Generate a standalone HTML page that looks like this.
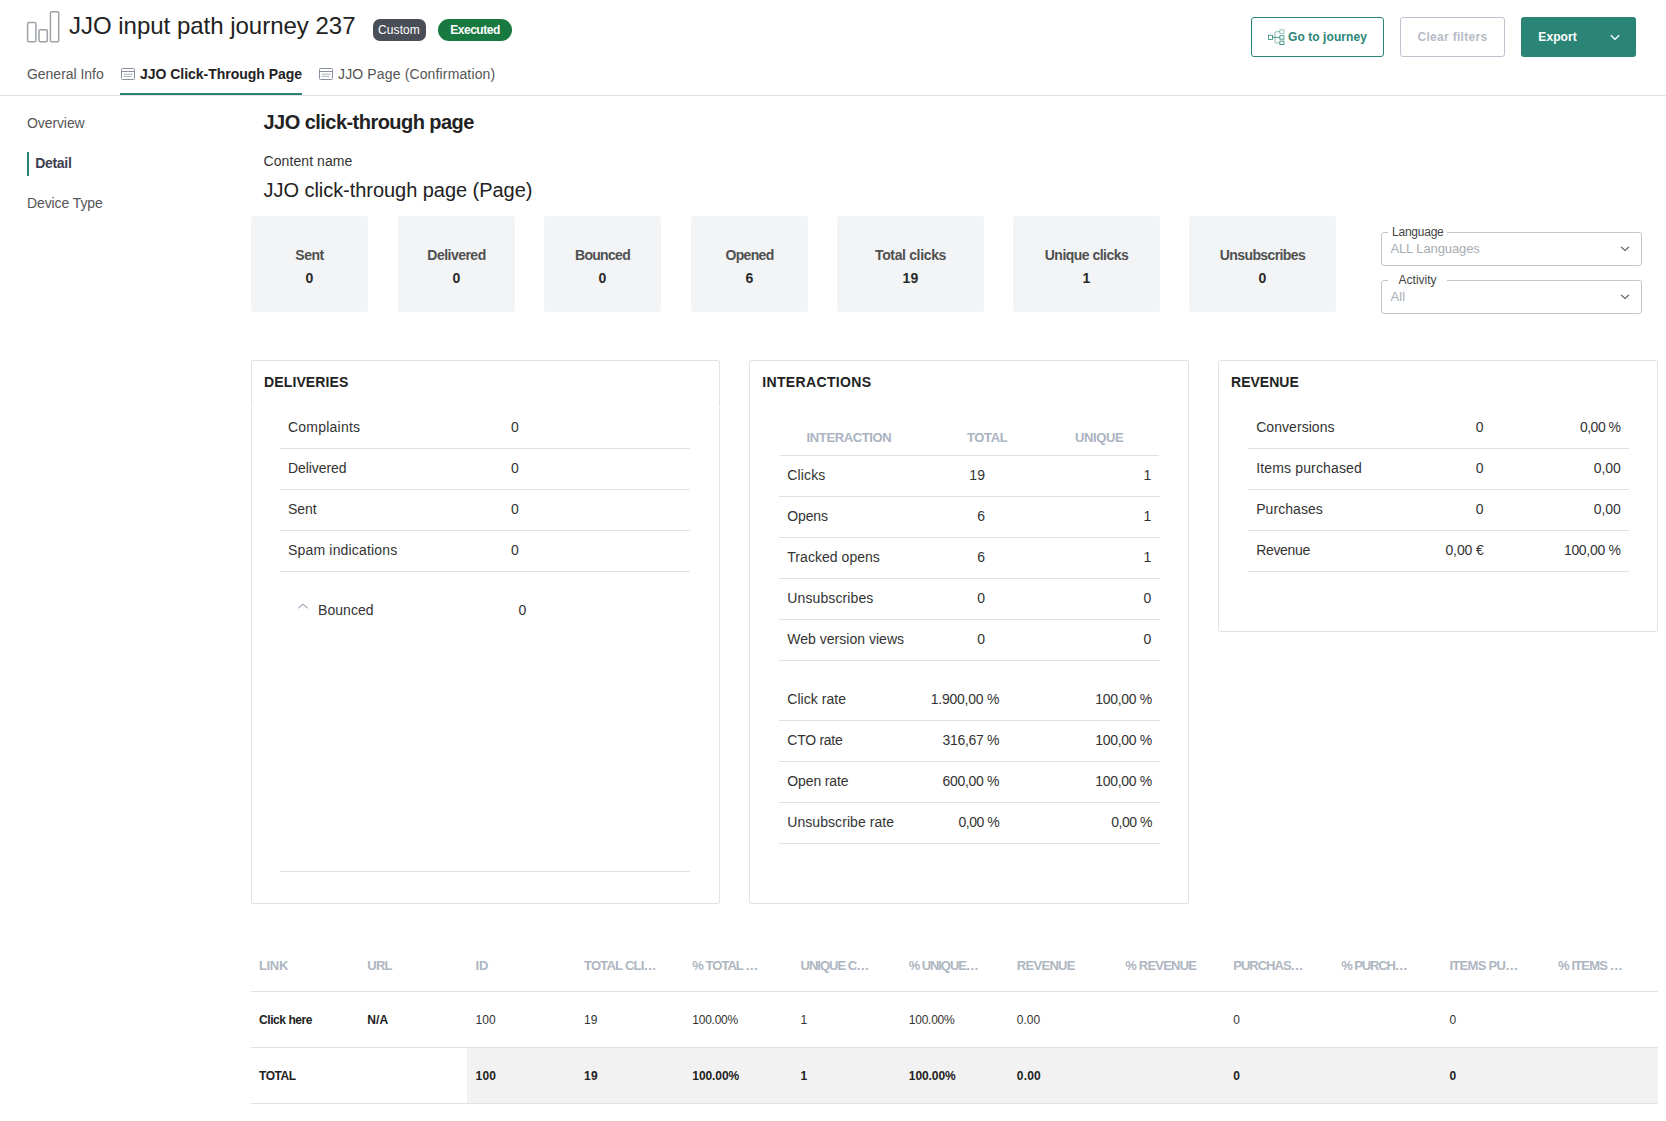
<!DOCTYPE html>
<html lang="en"><head><meta charset="utf-8"><title>JJO input path journey 237</title>
<style>
html,body{margin:0;padding:0;background:#fff}
body{width:1666px;height:1121px;position:relative;overflow:hidden;font-family:"Liberation Sans",sans-serif}
.t{position:absolute;white-space:pre;line-height:20px;font-family:"Liberation Sans",sans-serif}
svg{position:absolute;overflow:visible}
</style></head><body>
<svg style="left:26px;top:10px" width="34" height="34" viewBox="26 10 34 34" fill="none" stroke="#9da1a8" stroke-width="1.5">
<rect x="27.6" y="22.6" width="8.3" height="19.2" rx="1.3"/><rect x="39" y="29.8" width="8.3" height="12" rx="1.3"/><rect x="50.4" y="11.8" width="8.3" height="30" rx="1.3"/></svg>
<div style="position:absolute;left:373px;top:19px;width:53px;height:22px;background:#4a4e57;border-radius:7px"></div>
<div style="position:absolute;left:438px;top:19px;width:74px;height:22px;background:#17793f;border-radius:11px"></div>
<div style="position:absolute;left:1251px;top:17px;width:131px;height:38px;border:1px solid #2b8576;border-radius:3px;background:#fff"></div>
<svg style="left:1267px;top:28px" width="18" height="18" viewBox="1267 28 18 18" fill="none" stroke="#2b8576" stroke-width=".8">
<rect x="1268.4" y="35.2" width="4.2" height="4.2"/>
<rect x="1279.9" y="29.8" width="4" height="3.6" opacity=".6"/>
<rect x="1279.9" y="35.7" width="4" height="3.5"/>
<rect x="1279.9" y="41.1" width="4" height="3.5"/>
<path d="M1272.5 37.4H1280"/>
<path d="M1280 31.7H1276.2Q1275 31.7 1275 32.9V41.7Q1275 42.9 1276.2 42.9H1280" opacity=".7"/></svg>
<div style="position:absolute;left:1400px;top:17px;width:103px;height:38px;border:1px solid #bfc3cf;border-radius:3px;background:#fff"></div>
<div style="position:absolute;left:1521px;top:17px;width:115px;height:40px;background:#2b8576;border-radius:3px"></div>
<div style="position:absolute;left:1593px;top:17px;width:1px;height:40px;background:#2a8073"></div>
<svg style="left:1609px;top:32px" width="12" height="10" viewBox="1609 32 12 10" fill="none" stroke="#fff" stroke-width="1.3"><path d="M1610.8 35.2L1615 39.3L1619.2 35.2"/></svg>
<svg style="left:121px;top:68px" width="15" height="13" viewBox="0 0 15 13" fill="none" stroke="#8a8fa0" stroke-width="1">
<rect x="0.5" y="0.5" width="13" height="11" rx="1"/><path d="M0.5 3.5H13.5"/><path d="M2.6 6.2H11.8M2.6 8.4H10.4" stroke-width=".8" opacity=".85"/></svg>
<svg style="left:319px;top:68px" width="15" height="13" viewBox="0 0 15 13" fill="none" stroke="#8a8fa0" stroke-width="1">
<rect x="0.5" y="0.5" width="13" height="11" rx="1"/><path d="M0.5 3.5H13.5"/><path d="M2.6 6.2H11.8M2.6 8.4H10.4" stroke-width=".8" opacity=".85"/></svg>
<div style="position:absolute;left:0px;top:95px;width:1666px;height:1px;background:#dfe1e6"></div>
<div style="position:absolute;left:120px;top:93px;width:182px;height:2px;background:#2b8576"></div>
<div style="position:absolute;left:27px;top:152px;width:2px;height:24px;background:#2b8576"></div>
<div style="position:absolute;left:251px;top:216px;width:117px;height:96px;background:#f3f4f6;border-radius:3px"></div>
<div style="position:absolute;left:398px;top:216px;width:117px;height:96px;background:#f3f4f6;border-radius:3px"></div>
<div style="position:absolute;left:544px;top:216px;width:117px;height:96px;background:#f3f4f6;border-radius:3px"></div>
<div style="position:absolute;left:691px;top:216px;width:117px;height:96px;background:#f3f4f6;border-radius:3px"></div>
<div style="position:absolute;left:837px;top:216px;width:147px;height:96px;background:#f3f4f6;border-radius:3px"></div>
<div style="position:absolute;left:1013px;top:216px;width:147px;height:96px;background:#f3f4f6;border-radius:3px"></div>
<div style="position:absolute;left:1189px;top:216px;width:147px;height:96px;background:#f3f4f6;border-radius:3px"></div>
<div style="position:absolute;left:1381px;top:232px;width:259px;height:32px;border:1px solid #c6c6c6;border-radius:3px"></div>
<div style="position:absolute;left:1388px;top:231px;width:59px;height:3px;background:#fff"></div>
<svg style="left:1619px;top:244px" width="12" height="9" viewBox="0 0 12 9" fill="none" stroke="#505050" stroke-width="1.1"><path d="M2.1 2.8L6 6.6L9.9 2.8"/></svg>
<div style="position:absolute;left:1381px;top:280px;width:259px;height:32px;border:1px solid #c6c6c6;border-radius:3px"></div>
<div style="position:absolute;left:1388px;top:279px;width:59px;height:3px;background:#fff"></div>
<svg style="left:1619px;top:292px" width="12" height="9" viewBox="0 0 12 9" fill="none" stroke="#505050" stroke-width="1.1"><path d="M2.1 2.8L6 6.6L9.9 2.8"/></svg>
<div style="position:absolute;left:251px;top:360px;width:467px;height:542px;border:1px solid #e0e2e9;border-radius:2px"></div>
<div style="position:absolute;left:749px;top:360px;width:438px;height:542px;border:1px solid #e0e2e9;border-radius:2px"></div>
<div style="position:absolute;left:1218px;top:360px;width:438px;height:270px;border:1px solid #e0e2e9;border-radius:2px"></div>
<div style="position:absolute;left:251px;top:407px;width:1px;height:1px;background:#fff"></div>
<div style="position:absolute;left:719px;top:407px;width:1px;height:1px;background:#fff"></div>
<div style="position:absolute;left:280px;top:448px;width:410px;height:1px;background:#dfe1ea"></div>
<div style="position:absolute;left:280px;top:489px;width:410px;height:1px;background:#dfe1ea"></div>
<div style="position:absolute;left:280px;top:530px;width:410px;height:1px;background:#dfe1ea"></div>
<div style="position:absolute;left:280px;top:571px;width:410px;height:1px;background:#dfe1ea"></div>
<svg style="left:296px;top:601px" width="14" height="9" viewBox="296 601 14 9" fill="none" stroke="#7a86a0" stroke-width="1"><path d="M298.2 608.2L303 604.2L307.8 608.2"/></svg>
<div style="position:absolute;left:280px;top:871px;width:410px;height:1px;background:#dfe1ea"></div>
<div style="position:absolute;left:780px;top:455px;width:379px;height:1px;background:#dfe1ea"></div>
<div style="position:absolute;left:779px;top:496px;width:381px;height:1px;background:#dfe1ea"></div>
<div style="position:absolute;left:779px;top:537px;width:381px;height:1px;background:#dfe1ea"></div>
<div style="position:absolute;left:779px;top:578px;width:381px;height:1px;background:#dfe1ea"></div>
<div style="position:absolute;left:779px;top:619px;width:381px;height:1px;background:#dfe1ea"></div>
<div style="position:absolute;left:779px;top:660px;width:381px;height:1px;background:#dfe1ea"></div>
<div style="position:absolute;left:779px;top:720px;width:381px;height:1px;background:#dfe1ea"></div>
<div style="position:absolute;left:779px;top:761px;width:381px;height:1px;background:#dfe1ea"></div>
<div style="position:absolute;left:779px;top:802px;width:381px;height:1px;background:#dfe1ea"></div>
<div style="position:absolute;left:779px;top:843px;width:381px;height:1px;background:#dfe1ea"></div>
<div style="position:absolute;left:1248px;top:448px;width:381px;height:1px;background:#dfe1ea"></div>
<div style="position:absolute;left:1248px;top:489px;width:381px;height:1px;background:#dfe1ea"></div>
<div style="position:absolute;left:1248px;top:530px;width:381px;height:1px;background:#dfe1ea"></div>
<div style="position:absolute;left:1248px;top:571px;width:381px;height:1px;background:#dfe1ea"></div>
<div style="position:absolute;left:251px;top:991px;width:1407px;height:1px;background:#e1e3e8"></div>
<div style="position:absolute;left:251px;top:1047px;width:1407px;height:1px;background:#e1e3e8"></div>
<div style="position:absolute;left:251px;top:1103px;width:1407px;height:1px;background:#e1e3e8"></div>
<div style="position:absolute;left:467px;top:1048px;width:1191px;height:55px;background:#f2f2f2"></div>
<span class="t" style="left:69.00px;top:16px;font-size:24px;font-weight:400;color:#222;letter-spacing:-0.014px">JJO input path journey 237</span>
<span class="t" style="left:378.10px;top:20px;font-size:12px;font-weight:400;color:#fff;letter-spacing:0.076px">Custom</span>
<span class="t" style="left:450.25px;top:20px;font-size:12px;font-weight:700;color:#fff;letter-spacing:-0.482px">Executed</span>
<span class="t" style="left:1288.10px;top:27px;font-size:12px;font-weight:700;color:#2b8576;letter-spacing:0.062px">Go to journey</span>
<span class="t" style="left:1417.50px;top:27px;font-size:12px;font-weight:700;color:#b7bbc6;letter-spacing:0.305px">Clear filters</span>
<span class="t" style="left:1538.30px;top:27px;font-size:12px;font-weight:700;color:#fff;letter-spacing:0.097px">Export</span>
<span class="t" style="left:27.00px;top:64px;font-size:14px;font-weight:400;color:#555;letter-spacing:-0.030px">General Info</span>
<span class="t" style="left:140.00px;top:64px;font-size:14px;font-weight:700;color:#222;letter-spacing:-0.027px">JJO Click-Through Page</span>
<span class="t" style="left:338.00px;top:64px;font-size:14px;font-weight:400;color:#555;letter-spacing:0.141px">JJO Page (Confirmation)</span>
<span class="t" style="left:27.00px;top:113px;font-size:14px;font-weight:400;color:#555;letter-spacing:-0.095px">Overview</span>
<span class="t" style="left:35.20px;top:153px;font-size:14px;font-weight:700;color:#3d4050;letter-spacing:-0.302px">Detail</span>
<span class="t" style="left:27.00px;top:193px;font-size:14px;font-weight:400;color:#555;letter-spacing:-0.098px">Device Type</span>
<span class="t" style="left:263.50px;top:112px;font-size:20px;font-weight:700;color:#222;letter-spacing:-0.541px">JJO click-through page</span>
<span class="t" style="left:263.50px;top:151px;font-size:14px;font-weight:400;color:#333;letter-spacing:0.086px">Content name</span>
<span class="t" style="left:263.50px;top:180px;font-size:20px;font-weight:400;color:#222;letter-spacing:-0.045px">JJO click-through page (Page)</span>
<span class="t" style="left:295.28px;top:245px;font-size:14px;font-weight:700;color:#505050;letter-spacing:-0.477px">Sent</span>
<span class="t" style="left:305.48px;top:268px;font-size:14px;font-weight:700;color:#2a2a2a;letter-spacing:0.250px">0</span>
<span class="t" style="left:427.33px;top:245px;font-size:14px;font-weight:700;color:#505050;letter-spacing:-0.523px">Delivered</span>
<span class="t" style="left:452.48px;top:268px;font-size:14px;font-weight:700;color:#2a2a2a;letter-spacing:0.250px">0</span>
<span class="t" style="left:574.97px;top:245px;font-size:14px;font-weight:700;color:#505050;letter-spacing:-0.690px">Bounced</span>
<span class="t" style="left:598.48px;top:268px;font-size:14px;font-weight:700;color:#2a2a2a;letter-spacing:0.250px">0</span>
<span class="t" style="left:725.40px;top:245px;font-size:14px;font-weight:700;color:#505050;letter-spacing:-0.654px">Opened</span>
<span class="t" style="left:745.48px;top:268px;font-size:14px;font-weight:700;color:#2a2a2a;letter-spacing:0.250px">6</span>
<span class="t" style="left:874.98px;top:245px;font-size:14px;font-weight:700;color:#505050;letter-spacing:-0.348px">Total clicks</span>
<span class="t" style="left:902.46px;top:268px;font-size:14px;font-weight:700;color:#2a2a2a;letter-spacing:0.250px">19</span>
<span class="t" style="left:1044.77px;top:245px;font-size:14px;font-weight:700;color:#505050;letter-spacing:-0.523px">Unique clicks</span>
<span class="t" style="left:1082.48px;top:268px;font-size:14px;font-weight:700;color:#2a2a2a;letter-spacing:0.250px">1</span>
<span class="t" style="left:1219.79px;top:245px;font-size:14px;font-weight:700;color:#505050;letter-spacing:-0.598px">Unsubscribes</span>
<span class="t" style="left:1258.48px;top:268px;font-size:14px;font-weight:700;color:#2a2a2a;letter-spacing:0.250px">0</span>
<span class="t" style="left:1392.00px;top:222px;font-size:12px;font-weight:400;color:#444;letter-spacing:-0.236px">Language</span>
<span class="t" style="left:1390.40px;top:239px;font-size:13px;font-weight:400;color:#a9adb3;letter-spacing:-0.093px">ALL Languages</span>
<span class="t" style="left:1398.60px;top:270px;font-size:12px;font-weight:400;color:#444;letter-spacing:-0.002px">Activity</span>
<span class="t" style="left:1390.40px;top:287px;font-size:13px;font-weight:400;color:#a9adb3;letter-spacing:0.120px">All</span>
<span class="t" style="left:264.00px;top:372px;font-size:14px;font-weight:700;color:#222;letter-spacing:0.125px">DELIVERIES</span>
<span class="t" style="left:762.20px;top:372px;font-size:14px;font-weight:700;color:#222;letter-spacing:0.358px">INTERACTIONS</span>
<span class="t" style="left:1231.00px;top:372px;font-size:14px;font-weight:700;color:#222;letter-spacing:0.016px">REVENUE</span>
<span class="t" style="left:288.00px;top:417px;font-size:14px;font-weight:400;color:#333;letter-spacing:0.224px">Complaints</span>
<span class="t" style="left:511.00px;top:417px;font-size:14px;font-weight:400;color:#333;letter-spacing:0.196px">0</span>
<span class="t" style="left:288.00px;top:458px;font-size:14px;font-weight:400;color:#333;letter-spacing:-0.088px">Delivered</span>
<span class="t" style="left:511.00px;top:458px;font-size:14px;font-weight:400;color:#333;letter-spacing:0.196px">0</span>
<span class="t" style="left:288.00px;top:499px;font-size:14px;font-weight:400;color:#333;letter-spacing:-0.082px">Sent</span>
<span class="t" style="left:511.00px;top:499px;font-size:14px;font-weight:400;color:#333;letter-spacing:0.196px">0</span>
<span class="t" style="left:288.00px;top:540px;font-size:14px;font-weight:400;color:#333;letter-spacing:0.177px">Spam indications</span>
<span class="t" style="left:511.00px;top:540px;font-size:14px;font-weight:400;color:#333;letter-spacing:0.196px">0</span>
<span class="t" style="left:318.00px;top:600px;font-size:14px;font-weight:400;color:#333;letter-spacing:0.050px">Bounced</span>
<span class="t" style="left:518.50px;top:600px;font-size:14px;font-weight:400;color:#333;letter-spacing:0.196px">0</span>
<span class="t" style="left:806.60px;top:428px;font-size:13px;font-weight:700;color:#aab3bf;letter-spacing:-0.368px">INTERACTION</span>
<span class="t" style="left:967.00px;top:428px;font-size:13px;font-weight:700;color:#aab3bf;letter-spacing:-0.385px">TOTAL</span>
<span class="t" style="left:1075.00px;top:428px;font-size:13px;font-weight:700;color:#aab3bf;letter-spacing:-0.394px">UNIQUE</span>
<span class="t" style="left:787.30px;top:465px;font-size:14px;font-weight:400;color:#333;letter-spacing:0.133px">Clicks</span>
<span class="t" style="left:969.31px;top:465px;font-size:14px;font-weight:400;color:#333;letter-spacing:0.204px">19</span>
<span class="t" style="left:1143.51px;top:465px;font-size:14px;font-weight:400;color:#333;letter-spacing:0.196px">1</span>
<span class="t" style="left:787.30px;top:506px;font-size:14px;font-weight:400;color:#333;letter-spacing:-0.155px">Opens</span>
<span class="t" style="left:977.31px;top:506px;font-size:14px;font-weight:400;color:#333;letter-spacing:0.196px">6</span>
<span class="t" style="left:1143.51px;top:506px;font-size:14px;font-weight:400;color:#333;letter-spacing:0.196px">1</span>
<span class="t" style="left:787.30px;top:547px;font-size:14px;font-weight:400;color:#333;letter-spacing:0.039px">Tracked opens</span>
<span class="t" style="left:977.31px;top:547px;font-size:14px;font-weight:400;color:#333;letter-spacing:0.196px">6</span>
<span class="t" style="left:1143.51px;top:547px;font-size:14px;font-weight:400;color:#333;letter-spacing:0.196px">1</span>
<span class="t" style="left:787.30px;top:588px;font-size:14px;font-weight:400;color:#333;letter-spacing:0.106px">Unsubscribes</span>
<span class="t" style="left:977.31px;top:588px;font-size:14px;font-weight:400;color:#333;letter-spacing:0.196px">0</span>
<span class="t" style="left:1143.51px;top:588px;font-size:14px;font-weight:400;color:#333;letter-spacing:0.196px">0</span>
<span class="t" style="left:787.30px;top:629px;font-size:14px;font-weight:400;color:#333;letter-spacing:0.017px">Web version views</span>
<span class="t" style="left:977.31px;top:629px;font-size:14px;font-weight:400;color:#333;letter-spacing:0.196px">0</span>
<span class="t" style="left:1143.51px;top:629px;font-size:14px;font-weight:400;color:#333;letter-spacing:0.196px">0</span>
<span class="t" style="left:787.30px;top:689px;font-size:14px;font-weight:400;color:#333;letter-spacing:0.043px">Click rate</span>
<span class="t" style="left:930.80px;top:689px;font-size:14px;font-weight:400;color:#333;letter-spacing:-0.244px">1.900,00 %</span>
<span class="t" style="left:1095.33px;top:689px;font-size:14px;font-weight:400;color:#333;letter-spacing:-0.313px">100,00 %</span>
<span class="t" style="left:787.30px;top:730px;font-size:14px;font-weight:400;color:#333;letter-spacing:-0.277px">CTO rate</span>
<span class="t" style="left:942.53px;top:730px;font-size:14px;font-weight:400;color:#333;letter-spacing:-0.313px">316,67 %</span>
<span class="t" style="left:1095.33px;top:730px;font-size:14px;font-weight:400;color:#333;letter-spacing:-0.313px">100,00 %</span>
<span class="t" style="left:787.30px;top:771px;font-size:14px;font-weight:400;color:#333;letter-spacing:-0.127px">Open rate</span>
<span class="t" style="left:942.53px;top:771px;font-size:14px;font-weight:400;color:#333;letter-spacing:-0.313px">600,00 %</span>
<span class="t" style="left:1095.33px;top:771px;font-size:14px;font-weight:400;color:#333;letter-spacing:-0.313px">100,00 %</span>
<span class="t" style="left:787.30px;top:812px;font-size:14px;font-weight:400;color:#333;letter-spacing:0.058px">Unsubscribe rate</span>
<span class="t" style="left:958.50px;top:812px;font-size:14px;font-weight:400;color:#333;letter-spacing:-0.483px">0,00 %</span>
<span class="t" style="left:1111.30px;top:812px;font-size:14px;font-weight:400;color:#333;letter-spacing:-0.483px">0,00 %</span>
<span class="t" style="left:1256.20px;top:417px;font-size:14px;font-weight:400;color:#333;letter-spacing:0.054px">Conversions</span>
<span class="t" style="left:1475.71px;top:417px;font-size:14px;font-weight:400;color:#333;letter-spacing:0.196px">0</span>
<span class="t" style="left:1579.90px;top:417px;font-size:14px;font-weight:400;color:#333;letter-spacing:-0.483px">0,00 %</span>
<span class="t" style="left:1256.20px;top:458px;font-size:14px;font-weight:400;color:#333;letter-spacing:0.150px">Items purchased</span>
<span class="t" style="left:1475.71px;top:458px;font-size:14px;font-weight:400;color:#333;letter-spacing:0.196px">0</span>
<span class="t" style="left:1593.85px;top:458px;font-size:14px;font-weight:400;color:#333;letter-spacing:-0.124px">0,00</span>
<span class="t" style="left:1256.20px;top:499px;font-size:14px;font-weight:400;color:#333;letter-spacing:0.059px">Purchases</span>
<span class="t" style="left:1475.71px;top:499px;font-size:14px;font-weight:400;color:#333;letter-spacing:0.196px">0</span>
<span class="t" style="left:1593.85px;top:499px;font-size:14px;font-weight:400;color:#333;letter-spacing:-0.124px">0,00</span>
<span class="t" style="left:1256.20px;top:540px;font-size:14px;font-weight:400;color:#333;letter-spacing:-0.328px">Revenue</span>
<span class="t" style="left:1445.43px;top:540px;font-size:14px;font-weight:400;color:#333;letter-spacing:-0.111px">0,00 €</span>
<span class="t" style="left:1563.93px;top:540px;font-size:14px;font-weight:400;color:#333;letter-spacing:-0.313px">100,00 %</span>
<span class="t" style="left:259.00px;top:956px;font-size:13px;font-weight:700;color:#aeb6c1;letter-spacing:-0.339px">LINK</span>
<span class="t" style="left:367.30px;top:956px;font-size:13px;font-weight:700;color:#aeb6c1;letter-spacing:-0.728px">URL</span>
<span class="t" style="left:475.50px;top:956px;font-size:13px;font-weight:700;color:#aeb6c1;letter-spacing:-0.214px">ID</span>
<span class="t" style="left:584.00px;top:956px;font-size:13px;font-weight:700;color:#aeb6c1;letter-spacing:-0.767px">TOTAL CLI…</span>
<span class="t" style="left:692.30px;top:956px;font-size:13px;font-weight:700;color:#aeb6c1;letter-spacing:-0.970px">% TOTAL …</span>
<span class="t" style="left:800.50px;top:956px;font-size:13px;font-weight:700;color:#aeb6c1;letter-spacing:-0.977px">UNIQUE C…</span>
<span class="t" style="left:908.80px;top:956px;font-size:13px;font-weight:700;color:#aeb6c1;letter-spacing:-1.097px">% UNIQUE…</span>
<span class="t" style="left:1016.80px;top:956px;font-size:13px;font-weight:700;color:#aeb6c1;letter-spacing:-0.704px">REVENUE</span>
<span class="t" style="left:1125.20px;top:956px;font-size:13px;font-weight:700;color:#aeb6c1;letter-spacing:-0.773px">% REVENUE</span>
<span class="t" style="left:1233.20px;top:956px;font-size:13px;font-weight:700;color:#aeb6c1;letter-spacing:-0.980px">PURCHAS…</span>
<span class="t" style="left:1341.30px;top:956px;font-size:13px;font-weight:700;color:#aeb6c1;letter-spacing:-1.121px">% PURCH…</span>
<span class="t" style="left:1449.40px;top:956px;font-size:13px;font-weight:700;color:#aeb6c1;letter-spacing:-0.691px">ITEMS PU…</span>
<span class="t" style="left:1557.90px;top:956px;font-size:13px;font-weight:700;color:#aeb6c1;letter-spacing:-0.826px">% ITEMS …</span>
<span class="t" style="left:259.00px;top:1010px;font-size:12px;font-weight:700;color:#222;letter-spacing:-0.427px">Click here</span>
<span class="t" style="left:367.30px;top:1010px;font-size:12px;font-weight:700;color:#222;letter-spacing:0.161px">N/A</span>
<span class="t" style="left:475.50px;top:1010px;font-size:12px;font-weight:400;color:#333;letter-spacing:0.068px">100</span>
<span class="t" style="left:584.00px;top:1010px;font-size:12px;font-weight:400;color:#333;letter-spacing:0.070px">19</span>
<span class="t" style="left:692.30px;top:1010px;font-size:12px;font-weight:400;color:#333;letter-spacing:-0.241px">100.00%</span>
<span class="t" style="left:800.50px;top:1010px;font-size:12px;font-weight:400;color:#333;letter-spacing:0.062px">1</span>
<span class="t" style="left:908.80px;top:1010px;font-size:12px;font-weight:400;color:#333;letter-spacing:-0.241px">100.00%</span>
<span class="t" style="left:1016.80px;top:1010px;font-size:12px;font-weight:400;color:#333;letter-spacing:0.012px">0.00</span>
<span class="t" style="left:1233.20px;top:1010px;font-size:12px;font-weight:400;color:#333;letter-spacing:0.062px">0</span>
<span class="t" style="left:1449.40px;top:1010px;font-size:12px;font-weight:400;color:#333;letter-spacing:0.062px">0</span>
<span class="t" style="left:259.00px;top:1066px;font-size:12px;font-weight:700;color:#222;letter-spacing:-0.472px">TOTAL</span>
<span class="t" style="left:475.50px;top:1066px;font-size:12px;font-weight:700;color:#222;letter-spacing:0.208px">100</span>
<span class="t" style="left:584.00px;top:1066px;font-size:12px;font-weight:700;color:#222;letter-spacing:0.211px">19</span>
<span class="t" style="left:692.30px;top:1066px;font-size:12px;font-weight:700;color:#222;letter-spacing:-0.085px">100.00%</span>
<span class="t" style="left:800.50px;top:1066px;font-size:12px;font-weight:700;color:#222;letter-spacing:0.203px">1</span>
<span class="t" style="left:908.80px;top:1066px;font-size:12px;font-weight:700;color:#222;letter-spacing:-0.085px">100.00%</span>
<span class="t" style="left:1016.80px;top:1066px;font-size:12px;font-weight:700;color:#222;letter-spacing:0.195px">0.00</span>
<span class="t" style="left:1233.20px;top:1066px;font-size:12px;font-weight:700;color:#222;letter-spacing:0.203px">0</span>
<span class="t" style="left:1449.40px;top:1066px;font-size:12px;font-weight:700;color:#222;letter-spacing:0.203px">0</span>
</body></html>
